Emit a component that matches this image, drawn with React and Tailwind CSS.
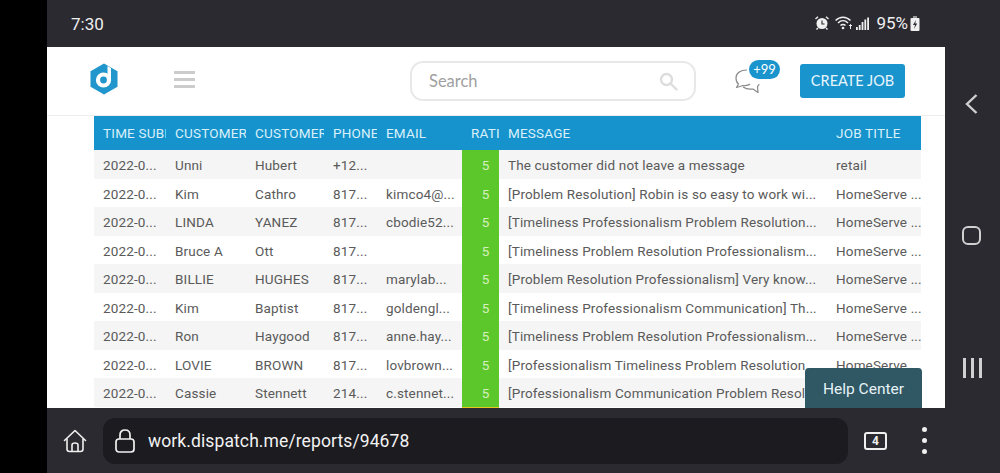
const COLS = 'grid grid-cols-[72px_80px_78px_53px_85px_37px_328px_94px]'

const rows = [
  ['2022-0...', 'Unni', 'Hubert', '+12...', '', 'The customer did not leave a message', 'retail'],
  ['2022-0...', 'Kim', 'Cathro', '817...', 'kimco4@...', '[Problem Resolution] Robin is so easy to work wi...', 'HomeServe ...'],
  ['2022-0...', 'LINDA', 'YANEZ', '817...', 'cbodie52...', '[Timeliness Professionalism Problem Resolution...', 'HomeServe ...'],
  ['2022-0...', 'Bruce A', 'Ott', '817...', '', '[Timeliness Problem Resolution Professionalism...', 'HomeServe ...'],
  ['2022-0...', 'BILLIE', 'HUGHES', '817...', 'marylab...', '[Problem Resolution Professionalism] Very know...', 'HomeServe ...'],
  ['2022-0...', 'Kim', 'Baptist', '817...', 'goldengl...', '[Timeliness Professionalism Communication] Th...', 'HomeServe ...'],
  ['2022-0...', 'Ron', 'Haygood', '817...', 'anne.hay...', '[Timeliness Problem Resolution Professionalism...', 'HomeServe ...'],
  ['2022-0...', 'LOVIE', 'BROWN', '817...', 'lovbrown...', '[Professionalism Timeliness Problem Resolution...', 'HomeServe ...'],
  ['2022-0...', 'Cassie', 'Stennett', '214...', 'c.stennet...', '[Professionalism Communication Problem Resolution...', 'HomeServe ...'],
]

function Cell({ children }) {
  return <div className="pl-[9px] overflow-hidden whitespace-nowrap">{children}</div>
}

function Row({ row, striped }) {
  return (
    <div className={`${COLS} h-[28.5px] items-stretch leading-[30px] ${striped ? 'bg-[#f5f5f5]' : 'bg-white'}`}>
      <Cell>{row[0]}</Cell>
      <Cell>{row[1]}</Cell>
      <Cell>{row[2]}</Cell>
      <Cell>{row[3]}</Cell>
      <Cell>{row[4]}</Cell>
      <div className="bg-[#5cc72b] text-[#d5efbd] text-center pl-[10px]">5</div>
      <Cell>{row[5]}</Cell>
      <Cell>{row[6]}</Cell>
    </div>
  )
}

function Logo() {
  return (
    <svg width="28" height="32" viewBox="0 0 28 32">
      <path d="M14 0.5 L27.5 8.2 V23.8 L14 31.5 L0.5 23.8 V8.2 Z" fill="#2196cc" />
      <circle cx="13.5" cy="17" r="7.6" fill="#fff" />
      <path d="M17.5 3 L21 5 V17 H17.5 Z" fill="#fff" />
      <circle cx="13.5" cy="17" r="3.4" fill="#2196cc" />
    </svg>
  )
}

function ChatIcon() {
  return (
    <svg width="26" height="25" viewBox="0 0 26 25" fill="none" stroke="#8a8a8a" strokeWidth="1.2" strokeLinejoin="round">
      <path d="M12 1 C5 1 1 4.5 1 9 C1 12 2 14 3.5 15 L1.5 18.5 L8 16.5 C12 17 14 16 15 15" />
      <path d="M8 18 C11 20 15 20.5 18 20 L23 23.5 L22.5 17.5 C23.5 16.5 24 16 24 15" />
    </svg>
  )
}

function StatusIcons() {
  return (
    <div className="flex items-center text-[#f0f0f0]">
      <svg width="14" height="14" viewBox="0 0 14 14">
        <circle cx="7" cy="7.5" r="5.5" fill="#f0f0f0" />
        <path d="M7 4.5 V8 H9.5" stroke="#2b2a30" strokeWidth="1.1" fill="none" />
        <path d="M0.5 3 L3 0.8 M13.5 3 L11 0.8 M3 12 L1.5 13.5 M11 12 L12.5 13.5" stroke="#f0f0f0" strokeWidth="1.4" />
      </svg>
      <svg width="18" height="14" viewBox="0 0 18 14" fill="none" stroke="#f0f0f0" strokeWidth="1.5" className="ml-[6px]">
        <path d="M0.5 4.5 C5 0 11 0 15.5 4.5" />
        <path d="M3 7 C6 4 10 4 13 7" />
        <path d="M5.5 9.5 C7 8 9 8 10.5 9.5" />
        <circle cx="8" cy="12" r="1.3" fill="#f0f0f0" stroke="none" />
        <path d="M15.5 13 V8.5 M14 10 L15.5 8.5 L17 10" strokeWidth="1" />
      </svg>
      <svg width="13" height="13" viewBox="0 0 13 13" fill="#f0f0f0" className="ml-[3px]">
        <rect x="0" y="10" width="1.8" height="3" />
        <rect x="2.8" y="8" width="1.8" height="5" />
        <rect x="5.6" y="5" width="1.8" height="8" />
        <rect x="8.4" y="2.5" width="1.8" height="10.5" />
        <rect x="11.2" y="0.5" width="1.8" height="12.5" />
      </svg>
      <span className="ml-[7px] text-[17px] leading-none">95%</span>
      <svg width="10" height="15" viewBox="0 0 10 15" className="ml-[2px]">
        <rect x="3" y="0" width="4" height="2" fill="#9a9a9a" />
        <rect x="0.5" y="2" width="9" height="13" rx="1" fill="#f0f0f0" />
        <path d="M6 4 L3 9 H5 L4 13 L7.2 7.5 H5.2 Z" fill="#2b2a30" />
      </svg>
    </div>
  )
}

function Page() {
  return (
    <div className="relative h-[361px] bg-white overflow-hidden font-['Roboto',sans-serif]">
      <div className="h-[69px] flex items-center border-b border-[#eeeeee]">
        <div className="ml-[43px] mb-[5px] w-[28px] h-[32px]"><Logo /></div>
        <div className="ml-[56px] mb-[3px] w-[21px] flex flex-col gap-[4px]">
          <div className="h-[3px] bg-[#cccccc]" />
          <div className="h-[3px] bg-[#cccccc]" />
          <div className="h-[3px] bg-[#cccccc]" />
        </div>
        <div className="ml-[215px] w-[286px] h-[40px] rounded-[13px] border-2 border-[#e8e8e8] flex items-center justify-between pl-[17px] pr-[16px] text-[16.5px] text-[#a0a0a0] font-['Lato',sans-serif]">
          <span>Search</span>
          <svg width="19" height="19" viewBox="0 0 19 19" fill="none" stroke="#dddddd" strokeWidth="2.4">
            <circle cx="7.5" cy="7.5" r="5.5" />
            <path d="M11.5 11.5 L17.5 17.5" strokeLinecap="round" />
          </svg>
        </div>
        <div className="relative ml-[39px] w-[45px] h-[40px]">
          <div className="absolute left-0 top-[8px]"><ChatIcon /></div>
          <div className="absolute left-[14px] top-[-1px] w-[31px] h-[19px] rounded-full bg-[#1a94cd] text-white text-[13px] leading-[19px] text-center font-['Lato',sans-serif]">+99</div>
        </div>
        <button className="ml-[20px] w-[105px] h-[34px] rounded-[3px] bg-[#1a94cd] text-[#e8f6fc] text-[14.5px] font-['Lato',sans-serif]">CREATE JOB</button>
      </div>
      <div className="ml-[47px] w-[827px] text-[13.5px] tracking-[0.15px] text-[#5a5a5a]">
        <div className={`${COLS} h-[34px] items-center bg-[#1693cc] text-[#d9f0fa] tracking-[0.2px]`}>
          <Cell>TIME SUBMITTED</Cell>
          <Cell>CUSTOMER</Cell>
          <Cell>CUSTOMER</Cell>
          <Cell>PHONE</Cell>
          <Cell>EMAIL</Cell>
          <Cell>RATING</Cell>
          <Cell>MESSAGE</Cell>
          <Cell>JOB TITLE</Cell>
        </div>
        {rows.map((row, i) => (
          <Row key={i} row={row} striped={i % 2 === 0} />
        ))}
        <div className={`${COLS} h-[28.5px] bg-white`}>
          <div className="col-start-6 bg-[#e8c81e]" />
        </div>
      </div>
      <div className="absolute right-[23px] bottom-0 w-[117px] h-[40px] rounded-t-[4px] bg-[#2f5764] text-[#e6f2f5] text-[15.5px] leading-[42px] text-center">Help Center</div>
    </div>
  )
}

function BottomBar() {
  return (
    <div className="h-[65px] bg-[#2b2a30] flex items-center font-['Roboto',sans-serif]">
      <svg width="24" height="24" viewBox="0 0 24 24" fill="none" stroke="#f0f0f0" strokeWidth="1.6" strokeLinejoin="round" className="ml-[16px]">
        <path d="M1.5 11.5 L12 1.5 L22.5 11.5" strokeLinecap="round" />
        <path d="M4 9.5 V20 C4 21.5 5 22.5 6.5 22.5 H17.5 C19 22.5 20 21.5 20 20 V9.5" />
        <path d="M9 22.5 V16 C9 14.5 10 14 12 14 C14 14 15 14.5 15 16 V22.5" />
      </svg>
      <div className="ml-[16px] w-[745px] h-[46px] rounded-[12px] bg-[#1c1b20] flex items-center">
        <svg width="20" height="24" viewBox="0 0 20 24" fill="none" stroke="#f0f0f0" strokeWidth="1.7" className="ml-[12px]">
          <rect x="1" y="10" width="18" height="13" rx="3" />
          <path d="M5 10 V6 C5 3 7 1 10 1 C13 1 15 3 15 6 V10" />
        </svg>
        <span className="ml-[13px] pt-[1px] text-[17.5px] text-[#f2f2f2] tracking-[0.1px]">work.dispatch.me/reports/94678</span>
      </div>
      <div className="ml-[16px] w-[23px] h-[18px] rounded-[3px] border-2 border-[#f0f0f0] text-[#f0f0f0] text-[12px] font-bold leading-[14px] text-center">4</div>
      <div className="ml-[35px] flex flex-col gap-[6px]">
        <div className="w-[5px] h-[5px] rounded-full bg-[#f0f0f0]" />
        <div className="w-[5px] h-[5px] rounded-full bg-[#f0f0f0]" />
        <div className="w-[5px] h-[5px] rounded-full bg-[#f0f0f0]" />
      </div>
    </div>
  )
}

function NavBar() {
  return (
    <div className="w-[55px] h-full bg-[#2b2a30] flex flex-col items-center pt-[94px]">
      <svg width="13" height="20" viewBox="0 0 13 20" fill="none" stroke="#d0d0d0" strokeWidth="2.4" className="-ml-[3px]">
        <path d="M11.5 1 L2 10 L11.5 19" />
      </svg>
      <div className="mt-[112px] -ml-[3px] w-[19px] h-[19px] rounded-[6px] border-2 border-[#d0d0d0]" />
      <div className="mt-[113px] -ml-[1px] flex gap-[5px]">
        <div className="w-[3px] h-[20px] bg-[#d0d0d0]" />
        <div className="w-[3px] h-[20px] bg-[#d0d0d0]" />
        <div className="w-[3px] h-[20px] bg-[#d0d0d0]" />
      </div>
    </div>
  )
}

export default function App() {
  return (
    <div className="w-[1000px] h-[473px] bg-black flex overflow-hidden">
      <div className="w-[47px] shrink-0" />
      <div className="w-[898px] shrink-0 flex flex-col">
        <div className="h-[47px] bg-[#2b2a30] flex items-center justify-between pl-[24px] pr-[25px] pb-[1px] font-['Roboto',sans-serif]">
          <span className="mt-[4px] text-[17px] text-[#f0f0f0]">7:30</span>
          <StatusIcons />
        </div>
        <Page />
        <BottomBar />
      </div>
      <NavBar />
    </div>
  )
}
